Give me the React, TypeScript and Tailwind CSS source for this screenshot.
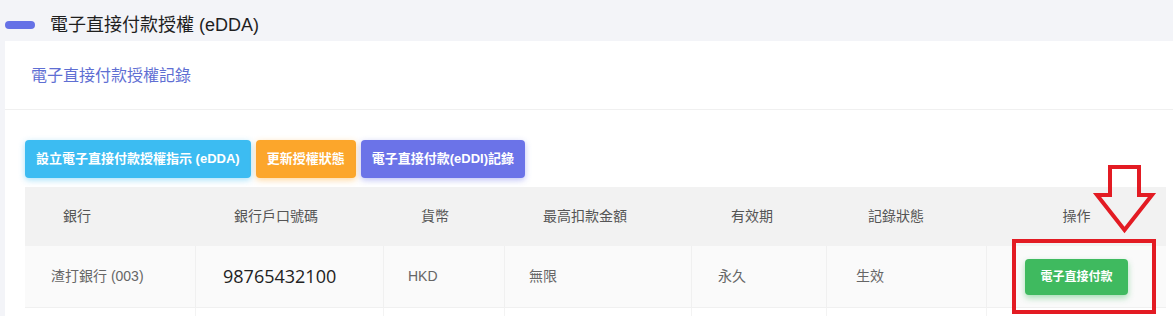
import React from "react";

const cjk = { fontFamily: '"Liberation Sans", "Noto Sans CJK TC", sans-serif' };

export default function App() {
  return (
    <div className="relative w-[1173px] h-[316px] overflow-hidden bg-[#f3f4f8]" style={cjk}>
      {/* Page title */}
      <div className="flex h-[41px] items-center gap-[15px] pl-[5px] pt-[8px]">
        <div className="h-[8px] w-[30px] rounded-full bg-[#6571e6]" />
        <div className="text-[18px] leading-[24px] text-[#1f1f1f]">電子直接付款授權 (eDDA)</div>
      </div>

      {/* Card */}
      <div className="ml-[5px] bg-white h-[275px]">
        <div className="flex h-[69px] items-center border-b border-[#f0f0f0] pl-[26px] pt-[1px]">
          <span className="text-[16px] text-[#5f6fd3]">電子直接付款授權記錄</span>
        </div>

        <div className="pl-[20px] pr-[2px] pt-[30px]">
          <div className="flex gap-[5px]">
            <button className="h-[38px] rounded-[4px] bg-[#3cbcf2] px-[11px] text-[13px] font-bold text-white shadow-[0_2px_6px_rgba(60,188,242,0.45)]">
              設立電子直接付款授權指示 (eDDA)
            </button>
            <button className="h-[38px] rounded-[4px] bg-[#fca62b] px-[11px] text-[13px] font-bold text-white shadow-[0_2px_6px_rgba(252,166,43,0.45)]">
              更新授權狀態
            </button>
            <button className="h-[38px] rounded-[4px] bg-[#6b73e8] px-[11px] text-[13px] font-bold text-white shadow-[0_2px_6px_rgba(107,115,232,0.45)]">
              電子直接付款(eDDI)記錄
            </button>
          </div>

          {/* Table */}
          <div className="mt-[9px] w-[1141px]">
            <div className="grid h-[59px] grid-cols-[171px_188px_121px_187px_135px_160px_179px] items-center bg-[#f2f2f2] text-[14px] text-[#555]">
              <div className="pl-[38px]">銀行</div>
              <div className="pl-[38px]">銀行戶口號碼</div>
              <div className="pl-[37px]">貨幣</div>
              <div className="pl-[38px]">最高扣款金額</div>
              <div className="pl-[39px]">有效期</div>
              <div className="pl-[41px]">記錄狀態</div>
              <div className="text-center">操作</div>
            </div>
            <div className="grid h-[61px] grid-cols-[171px_188px_121px_187px_135px_160px_179px] bg-[#fafafa] text-[14px] text-[#666]">
              <div className="flex items-center border-r border-[#f0f0f0] pl-[26px]">渣打銀行 (003)</div>
              <div className="flex items-center border-r border-[#f0f0f0] pl-[27px] text-[18px] text-[#222]" style={{ fontFamily: '"Open Sans", "Liberation Sans", sans-serif', fontWeight: 500 }}>
                98765432100
              </div>
              <div className="flex items-center border-r border-[#f0f0f0] pl-[24px]">HKD</div>
              <div className="flex items-center border-r border-[#f0f0f0] pl-[24px]">無限</div>
              <div className="flex items-center border-r border-[#f0f0f0] pl-[26px]">永久</div>
              <div className="flex items-center border-r border-[#f0f0f0] pl-[29px]">生效</div>
              <div className="flex items-center justify-center">
                <button className="h-[36px] rounded-[4px] bg-[#3fba5f] px-[15px] text-[12px] font-bold text-white shadow-[0_3px_6px_rgba(63,186,95,0.45)]">
                  電子直接付款
                </button>
              </div>
            </div>
            <div className="grid h-[20px] grid-cols-[171px_188px_121px_187px_135px_160px_179px] border-t border-[#f0f0f0] bg-white">
              <div className="border-r border-[#f3f3f3]" />
              <div className="border-r border-[#f3f3f3]" />
              <div className="border-r border-[#f3f3f3]" />
              <div className="border-r border-[#f3f3f3]" />
              <div className="border-r border-[#f3f3f3]" />
              <div className="border-r border-[#f3f3f3]" />
              <div />
            </div>
          </div>
        </div>
      </div>

      {/* Red annotation overlay */}
      <svg className="absolute left-0 top-0" width="1173" height="316" viewBox="0 0 1173 316">
        <polygon
          points="1110,167 1139,167 1139,195 1152,195 1124.5,230 1097,195 1110,195"
          fill="none"
          stroke="#e31b23"
          strokeWidth="4"
          strokeLinejoin="miter"
        />
        <rect x="1014" y="241" width="140" height="71" fill="none" stroke="#e31b23" strokeWidth="4" />
      </svg>
    </div>
  );
}
